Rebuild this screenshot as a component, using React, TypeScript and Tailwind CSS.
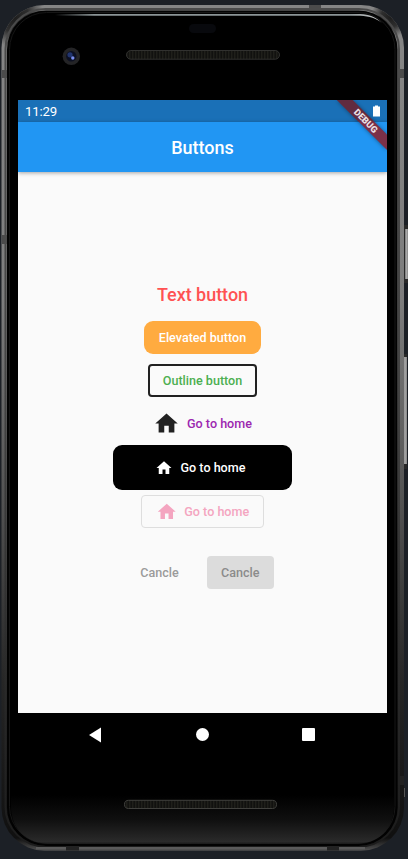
import React from "react";

function HomeIcon({ className }: { className: string }) {
  return (
    <svg viewBox="0 0 24 24" className={className} fill="currentColor">
      <path d="M10 20v-6h4v6h5v-8h3L12 3 2 12h3v8z" />
    </svg>
  );
}

function DeviceFrame() {
  return (
    <svg className="absolute inset-0" width="408" height="859" viewBox="0 0 408 859">
      <defs>
        <linearGradient id="metal" x1="0" y1="0" x2="0" y2="1">
          <stop offset="0" stopColor="#858585" />
          <stop offset="0.06" stopColor="#858585" />
          <stop offset="0.35" stopColor="#7d7d7d" />
          <stop offset="0.6" stopColor="#505050" />
          <stop offset="0.8" stopColor="#262626" />
          <stop offset="0.985" stopColor="#101010" />
          <stop offset="1" stopColor="#505050" />
        </linearGradient>
        <linearGradient id="edge" x1="0" y1="0" x2="0" y2="1">
          <stop offset="0" stopColor="#4a4a4a" />
          <stop offset="0.45" stopColor="#444444" />
          <stop offset="0.8" stopColor="#2a2a2a" />
          <stop offset="1" stopColor="#1c1c1c" />
        </linearGradient>
        <linearGradient id="chin" x1="0" y1="0" x2="0" y2="1">
          <stop offset="0" stopColor="#000000" />
          <stop offset="0.5" stopColor="#0f0f0f" />
          <stop offset="0.95" stopColor="#2a2a2a" />
          <stop offset="1" stopColor="#1a1a1a" />
        </linearGradient>
        <linearGradient id="shine" x1="0" y1="0" x2="1" y2="0">
          <stop offset="0" stopColor="#8b9496" stopOpacity="0" />
          <stop offset="0.12" stopColor="#8b9496" />
          <stop offset="0.9" stopColor="#8b9496" />
          <stop offset="1" stopColor="#d0d0d0" />
        </linearGradient>
        <linearGradient id="key" x1="0" y1="0" x2="1" y2="0">
          <stop offset="0" stopColor="#777777" />
          <stop offset="0.5" stopColor="#a8a8a8" />
          <stop offset="1" stopColor="#858585" />
        </linearGradient>
        <radialGradient id="cornerShade">
          <stop offset="0" stopColor="#0a0a0a" stopOpacity="0.85" />
          <stop offset="0.5" stopColor="#0a0a0a" stopOpacity="0.7" />
          <stop offset="1" stopColor="#0a0a0a" stopOpacity="0" />
        </radialGradient>
        <clipPath id="body">
          <rect x="1.5" y="5" width="402.5" height="845.7" rx="43" />
        </clipPath>
        <pattern id="mesh" width="3" height="10" patternUnits="userSpaceOnUse">
          <rect width="3" height="10" fill="#11110f" />
          <rect width="1.4" height="10" fill="#1f1f1a" />
        </pattern>
      </defs>
      <rect x="403" y="225" width="5" height="58" fill="#292929" />
      <rect x="405" y="229" width="3" height="50" fill="url(#key)" />
      <rect x="402" y="354" width="5" height="115" fill="#292929" />
      <rect x="403" y="357" width="4" height="107" fill="url(#key)" />
      <rect x="403.5" y="788" width="1.5" height="9" fill="#555555" />
      <rect x="1.5" y="5" width="402.5" height="845.7" rx="43" fill="url(#metal)" />
      <g clipPath="url(#body)">
        <circle cx="14" cy="17" r="30" fill="url(#cornerShade)" />
        <circle cx="391" cy="17" r="20" fill="url(#cornerShade)" />
      </g>
      <rect x="5.5" y="9" width="393.5" height="837.5" rx="40" fill="none" stroke="url(#edge)" strokeWidth="2" />
      <rect x="7" y="10.5" width="390.5" height="835.5" rx="39" fill="#020202" />
      <rect x="9.5" y="12.5" width="385.5" height="831" rx="37" fill="#000000" stroke="#161616" />
      <path d="M11 795H394V806C394 830 378 844 354 844H51C27 844 11 830 11 806Z" fill="url(#chin)" />
      <g fill="#4b4b4b">
        <rect x="2" y="70" width="5" height="8" />
        <rect x="2" y="235" width="5" height="9" />
        <rect x="309" y="5" width="12" height="5" />
        <rect x="398" y="69" width="6" height="9" />
      </g>
      <path d="M55 14H360C370 14.4 376 17.4 382 23C376 18.5 370 16.3 360 15.8H55Z" fill="url(#shine)" />
      <path d="M36 848.5H365" stroke="#505050" strokeWidth="3" />
      <path d="M36 848H365" stroke="#707070" strokeWidth="0.7" />
      <g fill="#222222">
        <rect x="66" y="846" width="13" height="4.5" />
        <rect x="327" y="846" width="12" height="4.5" />
        <rect x="398" y="776" width="6" height="9" />
      </g>
      <rect x="189" y="24" width="27" height="9" rx="4.5" fill="#08090d" />
      <circle cx="71.3" cy="56.3" r="8.7" fill="#242426" />
      <circle cx="71.3" cy="56.3" r="5.2" fill="#0c1022" />
      <circle cx="70" cy="54.8" r="2.6" fill="#22356f" />
      <circle cx="72.8" cy="58" r="1.7" fill="#7a8ff0" />
      <rect x="126.5" y="50.5" width="153" height="8.7" rx="4.35" fill="url(#mesh)" stroke="#31312f" />
      <rect x="124.5" y="800.3" width="152" height="8.2" rx="4.1" fill="url(#mesh)" stroke="#40403d" />
    </svg>
  );
}

function DebugBanner() {
  return (
    <svg className="absolute top-0 right-0" width="60" height="60" viewBox="0 0 60 60">
      <defs>
        <filter id="bannerShadow" x="-30%" y="-30%" width="160%" height="160%">
          <feGaussianBlur stdDeviation="2" />
        </filter>
      </defs>
      <path d="M10 0H25L60 35V50Z" fill="#000000" fillOpacity="0.45" filter="url(#bannerShadow)" />
      <path d="M10 0H25.5L60 34.5V50Z" fill="#7b3048" />
      <path d="M10 0H25.5L47 21.5H31.5Z" fill="#612b3f" />
      <text
        x="38.6"
        y="24"
        transform="rotate(45 38.6 21.2)"
        textAnchor="middle"
        fill="#e9dfe3"
        className="font-[Roboto,sans-serif] text-[9.2px] font-black"
      >
        DEBUG
      </text>
    </svg>
  );
}

function StatusBar() {
  return (
    <div className="flex h-[22px] items-center justify-between bg-[#1a70b7] px-[7px] text-white">
      <span className="pt-px text-[13.2px] leading-[22px] tracking-[-0.2px]">11:29</span>
      <svg width="7" height="12" viewBox="0 0 7 12" fill="white">
        <path d="M2 0.5H5V1.5H7V11.5H0V1.5H2Z" />
      </svg>
    </div>
  );
}

export default function App() {
  return (
    <div className="relative h-[859px] w-[408px] overflow-hidden bg-[#1c2026] font-[Roboto,sans-serif]">
      <DeviceFrame />
      <div className="relative flex h-full flex-col pt-[100px] pr-[21px] pl-[18px]">
        <div className="relative flex h-[613px] flex-col overflow-hidden bg-[#fafafa]">
          <StatusBar />
          <header className="z-0 flex h-[50px] shrink-0 items-center justify-center bg-[#2196f3] pt-[2px] shadow-[0_1px_4px_rgba(0,0,0,0.35)]">
            <h1 className="text-[17.96px] leading-none font-medium text-white">Buttons</h1>
          </header>
          <main className="flex flex-1 flex-col items-center pt-[112px] text-[12.57px] font-medium">
            <button className="h-[22px] text-[17.96px] leading-[22px] text-[#ff5252]">Text button</button>
            <button className="mt-[15px] h-[33px] w-[117px] rounded-[9px] bg-[#ffab40] pt-[2px] text-white">Elevated button</button>
            <button className="mt-[10px] h-[33px] w-[109px] rounded-[4px] border-2 border-[#212121] pt-[2px] text-[#4caf50]">Outline button</button>
            <button className="mt-[10px] flex h-[32px] items-center gap-[7px] text-[#9c27b0]">
              <HomeIcon className="size-[27px] text-[#212121]" />
              <span className="pt-[2px]">Go to home</span>
            </button>
            <button className="mt-[6px] flex h-[45px] w-[179px] items-center justify-center gap-[8px] rounded-[9px] bg-black pr-[5px] text-white">
              <HomeIcon className="size-[18px]" />
              <span className="pt-[2px]">Go to home</span>
            </button>
            <button className="mt-[5px] flex h-[33px] w-[123px] items-center justify-center gap-[7px] rounded-[4px] border border-[#dedede] text-[#f4a5c0]">
              <HomeIcon className="size-[21.5px]" />
              <span className="pt-[2px]">Go to home</span>
            </button>
            <div className="mt-[28px] flex items-center gap-[28px] pl-[9px]">
              <button className="h-[33px] pt-[2px] text-[#9b9b9b]">Cancle</button>
              <button className="h-[33px] w-[67px] rounded-[4px] bg-[#dcdcdc] pt-[2px] text-[#8b8b8b]">Cancle</button>
            </div>
          </main>
          <DebugBanner />
        </div>
        <nav className="flex h-[43px] items-center justify-center gap-[93px] pr-[2px]">
          <svg width="14" height="16" viewBox="0 0 14 16" fill="white">
            <path d="M0 8L12 0.5V15.5Z" />
          </svg>
          <div className="size-[13px] rounded-full bg-white" />
          <div className="size-[13px] rounded-[1px] bg-white" />
        </nav>
      </div>
    </div>
  );
}
